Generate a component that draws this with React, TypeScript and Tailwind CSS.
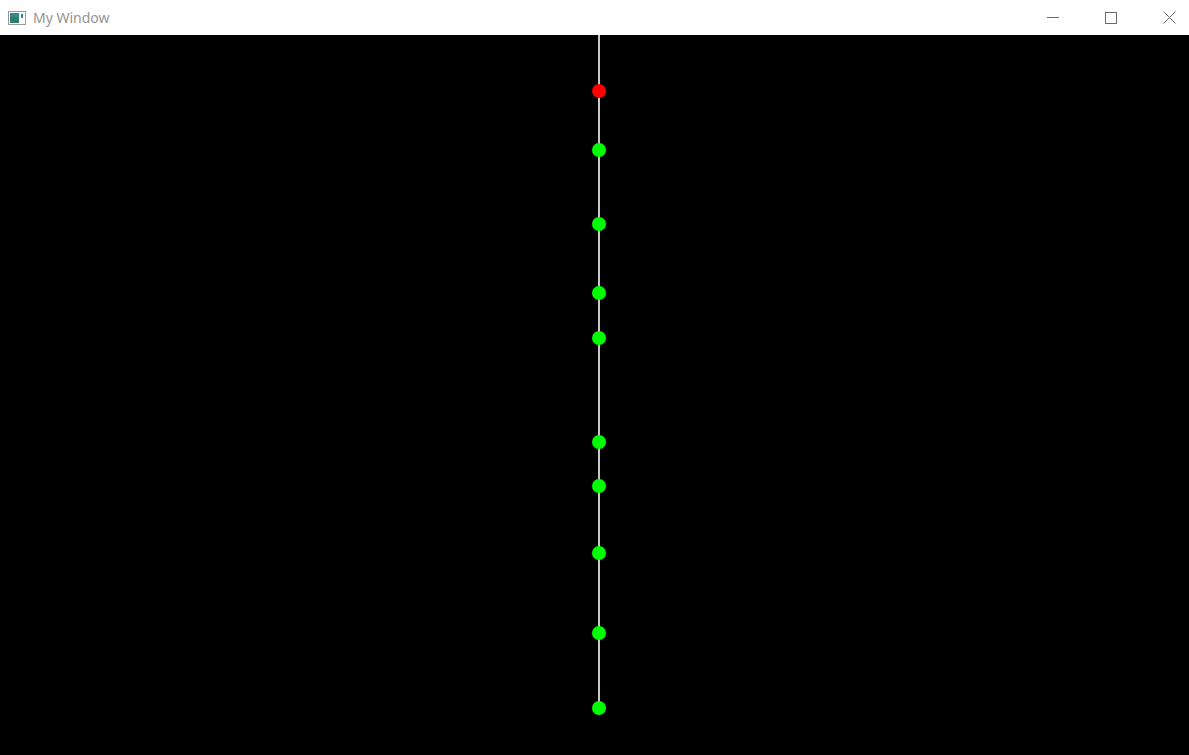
const dots = [
  { y: 91, color: "#ff0000" },
  { y: 150, color: "#00ff00" },
  { y: 224, color: "#00ff00" },
  { y: 293, color: "#00ff00" },
  { y: 338, color: "#00ff00" },
  { y: 442, color: "#00ff00" },
  { y: 486, color: "#00ff00" },
  { y: 553, color: "#00ff00" },
  { y: 633, color: "#00ff00" },
  { y: 708, color: "#00ff00" },
];

// canvas starts below the 35px title bar
const TOP = 35;

function AppIcon() {
  return (
    <svg width="18" height="14" viewBox="0 0 18 14">
      <rect x="0.5" y="0.5" width="17" height="13" fill="#fff" stroke="#9a9a9a" />
      <rect x="2" y="2" width="9" height="10" fill="#2f7f6f" />
      <rect x="2" y="2" width="9" height="4" fill="#3b8fa0" opacity="0.6" />
      <rect x="13" y="3" width="2" height="4" fill="#3b7f8a" />
    </svg>
  );
}

function TitleBar() {
  return (
    <div className="flex h-[35px] items-center overflow-hidden bg-white">
      <div className="ml-[8px] flex items-center">
        <AppIcon />
      </div>
      <span className="ml-[7px] -mt-px font-['Noto_Sans',sans-serif] text-[14px] text-[#959595]">
        My Window
      </span>
      <div className="ml-auto mr-[-9px] flex h-full">
        <div className="flex w-[58px] items-center justify-center">
          <div className="h-px w-[12px] bg-[#6b6b6b]" />
        </div>
        <div className="flex w-[58px] items-center justify-center">
          <div className="size-[12px] border border-[#6b6b6b]" />
        </div>
        <div className="flex w-[58px] items-center justify-center">
          <svg width="13" height="13" viewBox="0 0 13 13">
            <path d="M0.5 0.5L12.5 12.5M12.5 0.5L0.5 12.5" stroke="#6b6b6b" strokeWidth="1" />
          </svg>
        </div>
      </div>
    </div>
  );
}

export default function App() {
  return (
    <div className="flex h-[755px] w-[1189px] flex-col overflow-hidden bg-black">
      <TitleBar />
      <div className="relative flex-1 bg-black">
        <svg width="1189" height="720" className="absolute left-0 top-0">
          <line x1="599" y1="0" x2="599" y2={708 - TOP} stroke="#c8c8c8" strokeWidth="2" />
          {dots.map((d) => (
            <circle key={d.y} cx="599" cy={d.y - TOP} r="7" fill={d.color} />
          ))}
        </svg>
      </div>
    </div>
  );
}
